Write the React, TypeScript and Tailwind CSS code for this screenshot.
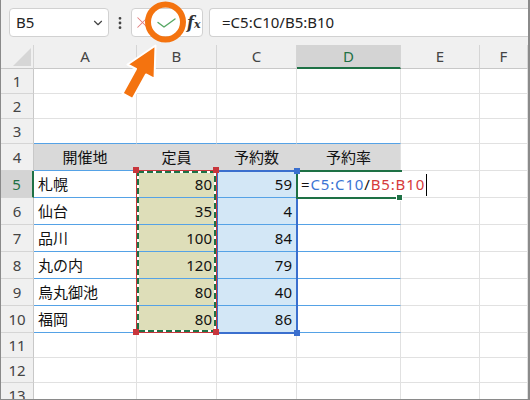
import { ChevronDown, EllipsisVertical, X } from 'lucide-react'
import clsx from 'clsx'

const widths = ['w-[103px]', 'w-[80px]', 'w-[80px]', 'w-[104px]', 'w-[79px]', 'flex-1']
const letters = ['A', 'B', 'C', 'D', 'E', 'F']
const rows = [1, 2, 3, 4, 5, 6, 7, 8, 9, 10, 11, 12, 13]

const table: Record<number, string[]> = {
  4: ['開催地', '定員', '予約数', '予約率'],
  5: ['札幌', '80', '59', ''],
  6: ['仙台', '35', '4', ''],
  7: ['品川', '100', '84', ''],
  8: ['丸の内', '120', '79', ''],
  9: ['烏丸御池', '80', '40', ''],
  10: ['福岡', '80', '86', ''],
}

function cellClass(r: number, c: number) {
  const inTable = r >= 4 && r <= 10 && c <= 3
  const data = r >= 5 && r <= 10
  return clsx(
    'shrink-0 h-full border-r border-b flex items-center px-[4px] leading-none',
    widths[c],
    inTable || (r === 3 && c <= 3) ? 'border-b-[#55a2e6]' : 'border-b-[#e1e1e1]',
    r === 4 && c <= 3 && 'bg-[#d9d9d9] justify-center',
    r === 4 && c < 3 ? 'border-r-[#d9d9d9]' : 'border-r-[#e1e1e1]',
    data && c === 1 && 'bg-[#dedeb9] justify-end',
    data && c === 2 && 'bg-[#d3e7f6] justify-end',
    !(r === 4 && c <= 3) && !(data && (c === 1 || c === 2)) && 'bg-white',
  )
}

function Toolbar() {
  return (
    <div className="flex h-[45px] pt-[8px] shrink-0">
      <div className="ml-2 w-[100px] h-[29px] bg-white border border-[#d1d1d1] rounded-[4px] flex items-center justify-between pl-[6px] pr-[3px] text-[15px] text-[#222]">
        <span>B5</span>
        <ChevronDown size={14} strokeWidth={2} className="text-[#444]" />
      </div>
      <div className="w-[22px] h-[29px] flex items-center justify-center text-[#444]">
        <EllipsisVertical size={16} strokeWidth={2.2} />
      </div>
      <div className="w-[72px] h-[29px] bg-white border border-[#d1d1d1] rounded-[4px] flex items-center">
        <div className="w-[21px] flex justify-center">
          <X size={19} strokeWidth={1.3} className="text-[#e27c7c]" />
        </div>
        <svg width="24" height="27" viewBox="153 9 24 27" className="shrink-0">
          <polyline points="158,22.5 164,27 175,19" fill="none" stroke="#57a865" strokeWidth="1.4" strokeLinecap="round" strokeLinejoin="round" />
        </svg>
        <span className="ml-[10px] flex items-baseline text-[#333] font-['DejaVu_Serif',serif] italic">
          <span className="text-[16px] font-bold">f</span>
          <span className="text-[11px] font-bold">x</span>
        </span>
      </div>
      <div className="ml-[6px] flex-1 h-[29px] bg-white border border-r-0 border-[#d1d1d1] rounded-l-[4px] flex items-center pl-[12px] text-[15px] text-[#222]">
        =C5:C10/B5:B10
      </div>
    </div>
  )
}

function ColumnHeader() {
  return (
    <div className="flex h-[24px] shrink-0">
      <div className="w-[33px] shrink-0 h-full border-r border-b border-r-[#d5d5d5] border-b-[#c8c8c8]">
        <svg width="32" height="23" viewBox="0 0 32 23">
          <polygon points="30,3 30,21 12,21" fill="#d6d6d6" />
        </svg>
      </div>
      {letters.map((l, c) => (
        <div
          key={l}
          className={clsx(
            'shrink-0 h-full flex items-center justify-center border-r border-r-[#d5d5d5] leading-none',
            widths[c],
            l === 'D' ? 'bg-[#d4d4d4] text-[#1e7145] border-b-2 border-b-[#1e7145]' : 'text-[#444] border-b border-b-[#c8c8c8]',
          )}
        >
          {l}
        </div>
      ))}
    </div>
  )
}

function GridRow({ r }: { r: number }) {
  const values = table[r] ?? []
  return (
    <div className={clsx('flex shrink-0', r >= 4 && r <= 10 ? 'h-[27px]' : 'h-[25px]')}>
      <div
        className={clsx(
          'w-[33px] shrink-0 h-full flex items-center justify-center border-b border-b-[#d5d5d5] leading-none',
          r === 5 ? 'bg-[#d4d4d4] text-[#1e7145] border-r-2 border-r-[#1e7145]' : 'text-[#444] border-r border-r-[#c8c8c8]',
        )}
      >
        {r}
      </div>
      {letters.map((l, c) => (
        <div key={l} className={cellClass(r, c)}>
          <span className="text-[#111] whitespace-nowrap">{values[c] ?? ''}</span>
        </div>
      ))}
    </div>
  )
}

function Annotation() {
  return (
    <svg width="210" height="110" viewBox="0 0 210 110" className="absolute left-[-1px] top-0 pointer-events-none">
      <circle cx="165.5" cy="22" r="17.5" fill="none" stroke="#f4730f" strokeWidth="6" />
      <polygon
        points="155.5,45.5 154.5,79 146,74.5 132.5,99 122.5,93.5 136,69 127.5,64.5"
        fill="#f4730f"
        stroke="#ffffff"
        strokeWidth="2"
        strokeLinejoin="round"
      />
    </svg>
  )
}

export default function App() {
  return (
    <div className="relative w-[530px] h-[400px] overflow-hidden flex flex-col bg-[#f0f0f0] border-l border-r-2 border-b border-[#8a8a8a] font-['Noto_Sans','Noto_Sans_CJK_JP',sans-serif] text-[15px]">
      <Toolbar />
      <ColumnHeader />
      {rows.map((r) => (
        <GridRow key={r} r={r} />
      ))}

      {/* C5:C10 reference (blue) */}
      <div className="absolute left-[215px] top-[170px] w-[82px] h-[164px] border-2 border-[#3b6fce]" />

      {/* B5:B10 reference (red) + copy ants */}
      <div className="absolute left-[135px] top-[170px] w-[81px] h-[163px] border border-[#c8363c]" />
      <svg width="79" height="161" className="absolute left-[136px] top-[171px]">
        <rect x="1" y="1" width="77" height="159" fill="none" stroke="#ffffff" strokeWidth="2" />
        <rect x="1" y="1" width="77" height="159" fill="none" stroke="#1e7145" strokeWidth="2" strokeDasharray="6 3" />
      </svg>
      <div className="absolute left-[132px] top-[167px] w-[6px] h-[6px] bg-[#c8363c]" />
      <div className="absolute left-[212px] top-[167px] w-[6px] h-[6px] bg-[#c8363c]" />
      <div className="absolute left-[132px] top-[329px] w-[6px] h-[6px] bg-[#c8363c]" />
      <div className="absolute left-[212px] top-[329px] w-[6px] h-[6px] bg-[#c8363c]" />

      {/* active cell D5 */}
      <div className="absolute left-[295px] top-[170px] w-[106px] h-[29px] border-t-2 border-l-2 border-b-2 border-[#1e7145]" />
      <div className="absolute left-[297px] top-[172px] h-[25px] pl-[3px] pr-[2px] bg-white flex items-center whitespace-nowrap leading-none tracking-[0.85px]">
        <span className="text-[#111]">=</span>
        <span className="text-[#3a75d4]">C5:C10</span>
        <span className="text-[#111]">/</span>
        <span className="text-[#d63a3a]">B5:B10</span>
        <span className="ml-[1px] w-[1px] h-[22px] bg-black" />
      </div>
      <div className="absolute left-[395px] top-[194px] w-[7px] h-[7px] bg-[#1e7145] border border-white" />

      <div className="absolute left-[293px] top-[168px] w-[6px] h-[6px] bg-[#3b6fce]" />
      <div className="absolute left-[293px] top-[330px] w-[6px] h-[6px] bg-[#3b6fce]" />

      <Annotation />
    </div>
  )
}
